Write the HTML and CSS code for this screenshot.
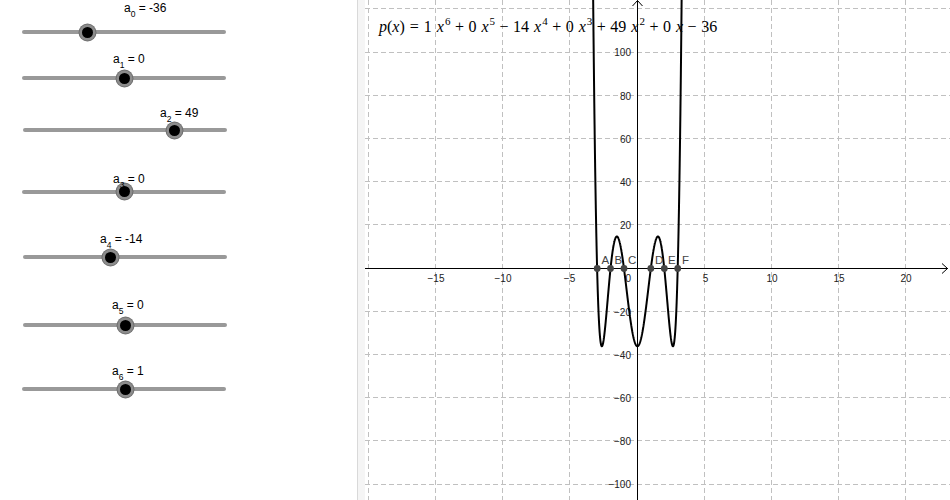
FILE: index.html
```html
<!DOCTYPE html>
<html>
<head>
<meta charset="utf-8">
<link rel="stylesheet" href="styles.css">
</head>
<body>
<div class="app">
  <div class="algebra">
    <div class="label l0">a<sub>0</sub> = -36</div>
    <div class="track t0"><span class="knob" style="left:32%"></span></div>
    <div class="label l1">a<sub>1</sub> = 0</div>
    <div class="track t1"><span class="knob" style="left:50%"></span></div>
    <div class="label l2">a<sub>2</sub> = 49</div>
    <div class="track t2"><span class="knob" style="left:74.5%"></span></div>
    <div class="track t3"><span class="knob" style="left:50%"></span></div>
    <div class="label l3">a<sub>3</sub> = 0</div>
    <div class="label l4">a<sub>4</sub> = -14</div>
    <div class="track t4"><span class="knob" style="left:43%"></span></div>
    <div class="label l5">a<sub>5</sub> = 0</div>
    <div class="track t5"><span class="knob" style="left:50%"></span></div>
    <div class="track t6"><span class="knob" style="left:50.5%"></span></div>
    <div class="label l6">a<sub>6</sub> = 1</div>
  </div>
  <div class="divider"></div>
  <div class="graphics">
    <svg class="plot" width="585" height="500" viewBox="365 0 585 500">
      <g class="grid">
        <line x1="368.5" y1="0" x2="368.5" y2="500"/>
        <line x1="435.5" y1="0" x2="435.5" y2="500"/>
        <line x1="502.5" y1="0" x2="502.5" y2="500"/>
        <line x1="569.5" y1="0" x2="569.5" y2="500"/>
        <line x1="704.5" y1="0" x2="704.5" y2="500"/>
        <line x1="771.5" y1="0" x2="771.5" y2="500"/>
        <line x1="838.5" y1="0" x2="838.5" y2="500"/>
        <line x1="905.5" y1="0" x2="905.5" y2="500"/>
        <line x1="365" y1="8.5" x2="950" y2="8.5"/>
        <line x1="365" y1="52.5" x2="950" y2="52.5"/>
        <line x1="365" y1="95.5" x2="950" y2="95.5"/>
        <line x1="365" y1="138.5" x2="950" y2="138.5"/>
        <line x1="365" y1="181.5" x2="950" y2="181.5"/>
        <line x1="365" y1="224.5" x2="950" y2="224.5"/>
        <line x1="365" y1="311.5" x2="950" y2="311.5"/>
        <line x1="365" y1="354.5" x2="950" y2="354.5"/>
        <line x1="365" y1="397.5" x2="950" y2="397.5"/>
        <line x1="365" y1="440.5" x2="950" y2="440.5"/>
        <line x1="365" y1="484.5" x2="950" y2="484.5"/>
      </g>
      <g class="axes">
        <line x1="365" y1="268.5" x2="948" y2="268.5"/>
        <polyline points="942,263.5 947.5,268.5 942,273.5"/>
        <line x1="637.5" y1="500" x2="637.5" y2="0.5"/>
        <polyline points="632.5,6 637.5,0.5 642.5,6"/>
      </g>
      <g class="xlabels">
        <text x="436" y="282">−15</text>
        <text x="503" y="282">−10</text>
        <text x="569.5" y="282">−5</text>
        <text x="705.5" y="282">5</text>
        <text x="772" y="282">10</text>
        <text x="839" y="282">15</text>
        <text x="906" y="282">20</text>
      </g>
      <g class="ylabels">
        <text x="631" y="282">0</text>
        <text x="631" y="56">100</text>
        <text x="631" y="99.5">80</text>
        <text x="631" y="142.5">60</text>
        <text x="631" y="186">40</text>
        <text x="631" y="229">20</text>
        <text x="631" y="315.5">−20</text>
        <text x="631" y="358.5">−40</text>
        <text x="631" y="401.5">−60</text>
        <text x="631" y="445">−80</text>
        <text x="631" y="488">−100</text>
      </g>
      <path id="curve" class="curve" d=""/>
      <g class="points">
        <circle cx="597.2" cy="268.5" r="3.4"/>
        <circle cx="610.5" cy="268.5" r="3.4"/>
        <circle cx="624" cy="268.5" r="3.4"/>
        <circle cx="650.8" cy="268.5" r="3.4"/>
        <circle cx="664.3" cy="268.5" r="3.4"/>
        <circle cx="677.7" cy="268.5" r="3.4"/>
      </g>
      <g class="plabels">
        <text x="601.5" y="263.5">A</text>
        <text x="614.5" y="263.5">B</text>
        <text x="628" y="263.5">C</text>
        <text x="655" y="263.5">D</text>
        <text x="668" y="263.5">E</text>
        <text x="682" y="263.5">F</text>
      </g>
    </svg>
    <div class="formula"><i>p</i>(<i>x</i>)<span class="rel">=</span><span class="c">1</span><i>x</i><sup>6</sup><span class="op">+</span><span class="c">0</span><i>x</i><sup>5</sup><span class="op">−</span><span class="c">14</span><i>x</i><sup>4</sup><span class="op">+</span><span class="c">0</span><i>x</i><sup>3</sup><span class="op">+</span><span class="c">49</span><i>x</i><sup>2</sup><span class="op">+</span><span class="c">0</span><i>x</i><span class="op">−</span>36</div>
  </div>
</div>
<script src="script.js"></script>
</body>
</html>
```

FILE: styles.css
```css
html, body {
  margin: 0;
  padding: 0;
  background: #fff;
}
body {
  width: 950px;
  height: 500px;
  overflow: hidden;
  font-family: "Liberation Sans", Arial, sans-serif;
}
.app {
  display: flex;
  height: 500px;
}
.algebra {
  position: relative;
  width: 357px;
  flex: none;
}
.divider {
  width: 7px;
  flex: none;
  border-left: 1px solid #d9d9d9;
  background: #f5f5f5;
}
.graphics {
  position: relative;
  flex: 1;
  overflow: hidden;
}
.plot {
  display: block;
}

/* sliders (free canvas objects) */
.label {
  position: absolute;
  font-size: 12px;
  line-height: 12px;
  color: #000;
  white-space: nowrap;
}
.label sub {
  font-size: 8.5px;
  line-height: 0;
  vertical-align: -5px;
}
.track {
  position: absolute;
  width: 204px;
  height: 4px;
  border-radius: 2px;
  background: #999;
}
.knob {
  position: absolute;
  top: 2px;
  width: 11px;
  height: 11px;
  margin: -5.5px 0 0 -5.5px;
  border-radius: 50%;
  background: #000;
  box-shadow: 0 0 0 2.5px #8c8c8c, 0 0 0 3.5px #6e6e6e;
}
.t0 { left: 22px; top: 30px; }
.t1 { left: 22px; top: 76px; }
.t2 { left: 23px; top: 128px; }
.t3 { left: 22px; top: 189.5px; }
.t4 { left: 23px; top: 255px; }
.t5 { left: 23px; top: 323px; }
.t6 { left: 22px; top: 387px; }
.l0 { left: 124px; top: 2px; }
.l1 { left: 113px; top: 53px; }
.l2 { left: 160px; top: 107px; }
.l3 { left: 113px; top: 173px; }
.l4 { left: 100px; top: 233px; }
.l5 { left: 112px; top: 299px; }
.l6 { left: 112px; top: 365px; }

/* graphics */
.grid line {
  stroke: #c0c0c0;
  stroke-width: 1;
  stroke-dasharray: 5 3;
}
.axes line, .axes polyline {
  stroke: #000;
  stroke-width: 1;
  fill: none;
}
.xlabels text, .ylabels text {
  font-family: "Liberation Sans", Arial, sans-serif;
  font-size: 10px;
  fill: #222;
}
.xlabels text { text-anchor: middle; }
.ylabels text { text-anchor: end; }
.curve {
  fill: none;
  stroke: #000;
  stroke-width: 2;
  stroke-linejoin: round;
}
.points circle {
  fill: #444;
}
.plabels text {
  font-family: "Liberation Sans", Arial, sans-serif;
  font-size: 11.5px;
  fill: #444;
}

.formula {
  position: absolute;
  left: 14px;
  top: 18px;
  font-family: "Liberation Serif", "Times New Roman", serif;
  font-size: 16px;
  line-height: 18px;
  color: #000;
  white-space: nowrap;
}
.formula i {
  font-style: italic;
}
.formula sup {
  font-size: 11px;
  line-height: 0;
  vertical-align: 7px;
  margin-left: 1px;
}
.formula .rel {
  margin: 0 5px;
}
.formula .op {
  margin: 0 4.5px;
}
.formula .c {
  margin-right: 5px;
}
```

FILE: script.js
```js
(function () {
  var coeffs = [-36, 0, 49, 0, -14, 0, 1];
  function p(x) {
    var s = 0;
    for (var i = coeffs.length - 1; i >= 0; i--) s = s * x + coeffs[i];
    return s;
  }
  var ox = 637.4, sx = 13.43, oy = 268.5, sy = 2.16;
  var d = '';
  for (var x = -3.34; x <= 3.3401; x += 0.005) {
    var X = ox + sx * x;
    var Y = oy - sy * p(x);
    if (Y < -50) Y = -50;
    d += (d ? 'L' : 'M') + X.toFixed(2) + ',' + Y.toFixed(2);
  }
  document.getElementById('curve').setAttribute('d', d);
})();
```
